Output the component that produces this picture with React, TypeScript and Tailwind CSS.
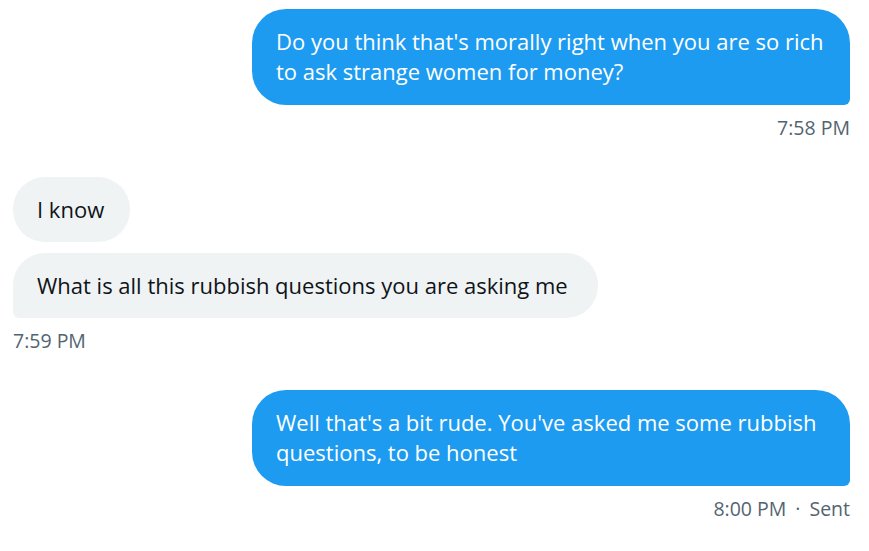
import React from "react";

const font = { fontFamily: '"Open Sans", "Noto Sans", sans-serif' };

export default function App() {
  return (
    <div className="w-[869px] h-[551px] bg-white overflow-hidden pl-[13px] pr-[19px] pt-[9px] text-[#0f1419]" style={font}>
      <div className="flex flex-col items-end">
        <div className="w-[598px] bg-[#1d9bf0] text-white rounded-[34px] rounded-br-[6px] pl-[24px] pr-[20px] pt-[17px] pb-[19px] text-[22px] leading-[30px]">
          Do you think that's morally right when you are so rich to ask strange women for money?
        </div>
        <div className="mt-[10px] text-[19.5px] leading-[26px] text-[#536471]">7:58 PM</div>
      </div>

      <div className="mt-[36px] flex flex-col items-start gap-[11px]">
        <div className="bg-[#eff3f4] rounded-[32px] pl-[24px] pr-[26px] pt-[17px] pb-[18px] text-[22px] leading-[30px]">I know</div>
        <div className="bg-[#eff3f4] rounded-[32px] rounded-bl-[6px] pl-[24px] pr-[30px] pt-[17px] pb-[18px] text-[22px] leading-[30px]">
          What is all this rubbish questions you are asking me
        </div>
      </div>
      <div className="mt-[10px] text-[19.5px] leading-[26px] text-[#536471]">7:59 PM</div>

      <div className="mt-[36px] flex flex-col items-end">
        <div className="w-[598px] bg-[#1d9bf0] text-white rounded-[34px] rounded-br-[6px] pl-[24px] pr-[20px] pt-[17px] pb-[19px] text-[22px] leading-[30px]">
          Well that's a bit rude. You've asked me some rubbish questions, to be honest
        </div>
        <div className="mt-[10px] flex items-center text-[19.5px] leading-[26px] text-[#536471]">
          <span>8:00 PM</span>
          <span className="mx-[9px]">·</span>
          <span>Sent</span>
        </div>
      </div>
    </div>
  );
}
